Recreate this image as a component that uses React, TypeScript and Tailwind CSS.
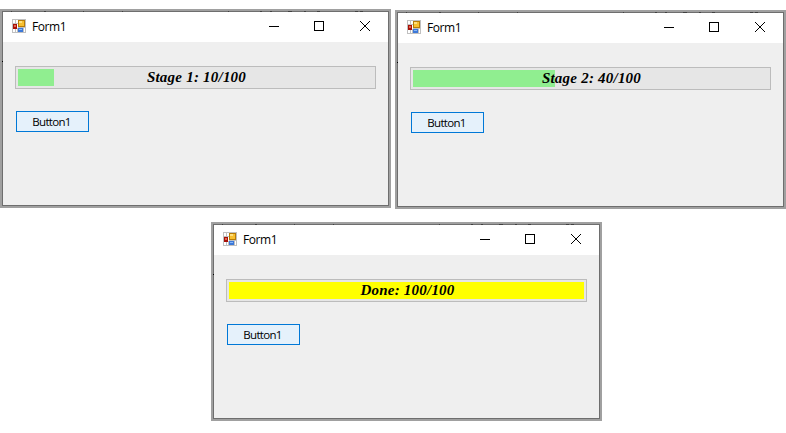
import React from "react";

type Stage = { label: string; fill: number; color: string };

const SPECKS = [
  { x: 9, w: 1 },
  { x: 42, w: 2 },
  { x: 81, w: 1 },
  { x: 120, w: 1 },
  { x: 226, w: 1 },
  { x: 258, w: 2 },
  { x: 268, w: 2 },
  { x: 286, w: 4 },
  { x: 302, w: 2 },
  { x: 315, w: 3 },
  { x: 353, w: 3 },
  { x: 358, w: 3 },
];

function FormIcon() {
  return (
    <svg width="14" height="14" viewBox="0 0 14 14" shapeRendering="crispEdges" className="shrink-0">
      <rect width="14" height="14" fill="#c0c0c0" />
      <path d="M1 1h2v3H1zM4 1h2v3H4zM1 10h2v3H1zM4 10h1v3H4z" fill="#fff" />
      <rect x="1" y="5" width="4" height="5" fill="#a81008" />
      <rect x="2" y="6" width="2" height="2" fill="#e06850" />
      <rect x="5" y="5" width="1" height="4" fill="#fff" />
      <rect x="6" y="1" width="7" height="7" fill="#b87c08" />
      <rect x="7" y="2" width="5" height="5" fill="#f8c030" />
      <rect x="7" y="2" width="3" height="2" fill="#ffe080" />
      <rect x="6" y="9" width="5" height="4" fill="#3c78d8" />
      <rect x="7" y="10" width="3" height="1" fill="#88b8f8" />
      <path d="M12 9h1v4h-1z" fill="#fff" />
    </svg>
  );
}

function TitleBar() {
  return (
    <div className="flex h-[30px] bg-white pl-[9px]">
      <div className="pt-[7px]">
        <FormIcon />
      </div>
      <span className="ml-1.5 mt-[7px] w-[230px] font-['Open_Sans','Noto_Sans',sans-serif] text-[12px] leading-4 tracking-[-0.4px] text-black">
        Form1
      </span>
      <svg width="120" height="30" viewBox="0 0 120 30" className="ml-auto shrink-0" stroke="#000" fill="none">
        <path d="M1 14.5h10" shapeRendering="crispEdges" />
        <rect x="46.5" y="9.5" width="9" height="9" shapeRendering="crispEdges" />
        <path d="M92 9l10 10M102 9l-10 10" strokeWidth="1" />
      </svg>
    </div>
  );
}

function FormWindow({ label, fill, color }: Stage) {
  return (
    <div className="h-[199px] w-[391px] shrink-0 border-2 border-[#a0a0a0]">
      <div className="relative h-full border border-[#6e6e6e] bg-[#efefef]">
        {SPECKS.map((s) => (
          <i key={s.x} className="absolute -top-px h-px bg-[#404040]" style={{ left: s.x - 1, width: s.w }} />
        ))}
        <i className="absolute -left-px top-[49px] h-px w-px bg-black" />
        <TitleBar />
        <div className="px-3 pt-6">
          <div className="grid h-[23px] w-[361px] border border-[#bcbcbc] bg-[#e6e6e6] p-0.5">
            <div className={`col-start-1 row-start-1 h-[17px] ${color}`} style={{ width: fill }} />
            <span className="z-10 col-start-1 row-start-1 whitespace-nowrap pl-0.5 text-center font-['Liberation_Serif',serif] text-[15px] font-bold italic leading-[17px] tracking-[0.22px] text-black">
              {label}
            </span>
          </div>
          <button className="ml-px mt-[22px] flex h-[21px] w-[73px] items-center justify-center border border-[#0078d7] bg-[#e5f1fb] pr-0.5 font-['Open_Sans','Noto_Sans',sans-serif] text-[11.5px] leading-[19px] tracking-[-0.7px] text-black">
            Button1
          </button>
        </div>
      </div>
    </div>
  );
}

export default function App() {
  return (
    <main className="h-[433px] w-[786px] overflow-hidden bg-white pt-[9px]">
      <div className="flex gap-1">
        <FormWindow label="Stage 1: 10/100" fill={36} color="bg-[#90ee90]" />
        <div className="pt-px">
          <FormWindow label="Stage 2: 40/100" fill={142} color="bg-[#90ee90]" />
        </div>
      </div>
      <div className="ml-[211px] mt-[13px]">
        <FormWindow label="Done: 100/100" fill={355} color="bg-[#ffff00]" />
      </div>
    </main>
  );
}
